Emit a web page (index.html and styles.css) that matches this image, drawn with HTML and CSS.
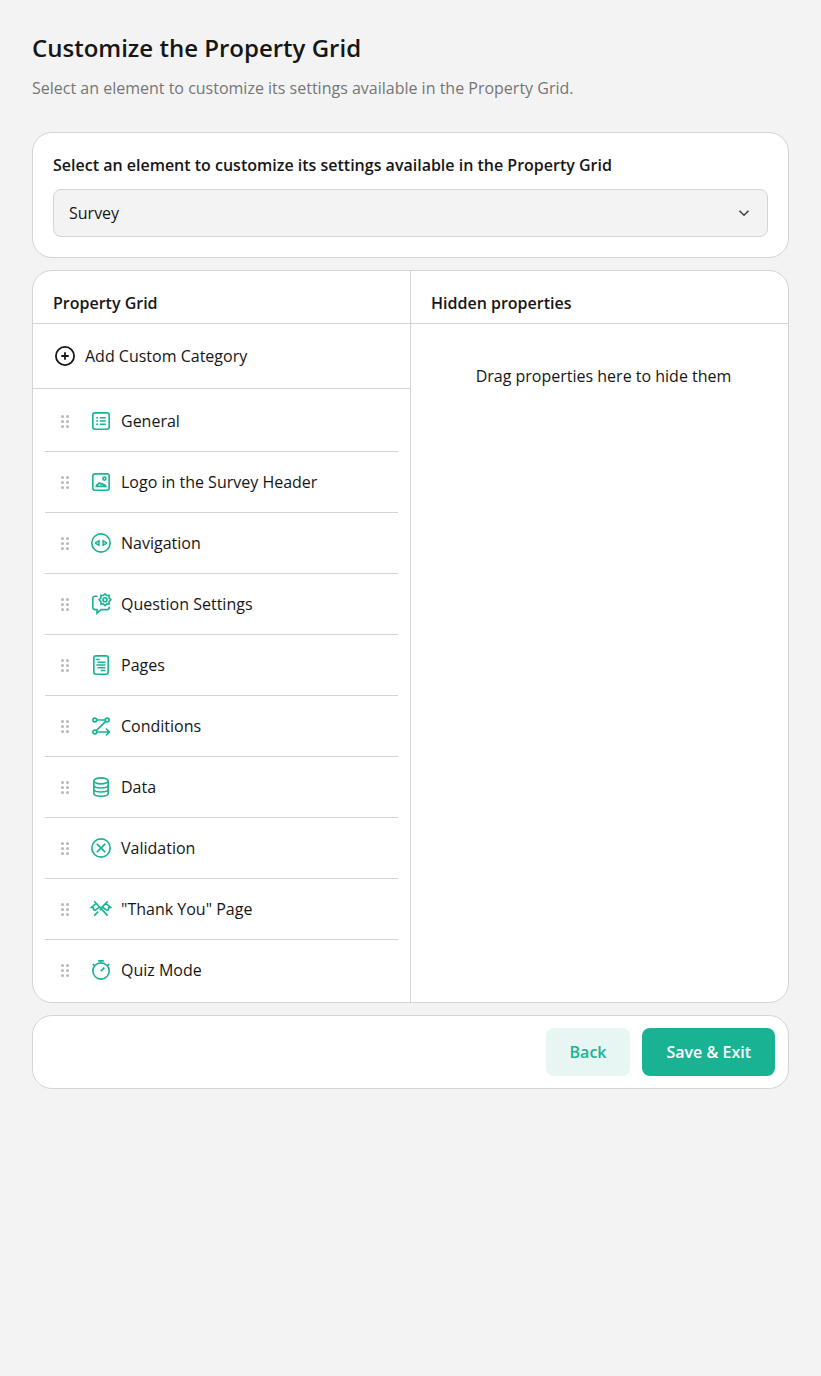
FILE: index.html
```html
<!DOCTYPE html>
<html lang="en">
<head>
<meta charset="utf-8">
<title>Customize the Property Grid</title>
<link rel="stylesheet" href="styles.css">
</head>
<body>
<svg class="sprite" aria-hidden="true">
  <symbol id="grip" viewBox="0 0 24 24"><g fill="currentColor"><circle cx="9.5" cy="7.5" r="1.5"/><circle cx="14.5" cy="7.5" r="1.5"/><circle cx="9.5" cy="12.5" r="1.5"/><circle cx="14.5" cy="12.5" r="1.5"/><circle cx="9.5" cy="17.5" r="1.5"/><circle cx="14.5" cy="17.5" r="1.5"/></g></symbol>
</svg>
<main class="page">
  <header class="page-header">
    <h1 class="title">Customize the Property Grid</h1>
    <p class="subtitle">Select an element to customize its settings available in the Property Grid.</p>
  </header>

  <section class="card selector">
    <h2 class="heading">Select an element to customize its settings available in the Property Grid</h2>
    <div class="dropdown" role="combobox">
      <span>Survey</span>
      <svg class="chevron" viewBox="0 0 16 16"><path d="M3.5 5.8L8 10.2l4.5-4.4"/></svg>
    </div>
  </section>

  <section class="card panels">
    <div class="panel">
      <h2 class="heading panel-title">Property Grid</h2>
      <div class="add">
        <svg class="add-icon" viewBox="0 0 24 24"><circle cx="12" cy="12" r="9.1"/><path d="M12 8.3v7.4M8.3 12h7.4"/></svg>
        <span>Add Custom Category</span>
      </div>
      <ul class="list">
        <li class="row"><svg class="grip"><use href="#grip"/></svg>
          <svg class="icon" viewBox="0 0 24 24"><rect x="3.8" y="3.8" width="16.4" height="16.4" rx="2.2"/><path d="M7.2 8.75h2M7.2 12h2M7.2 15.25h2M10.8 8.75h6M10.8 12h6M10.8 15.25h6"/></svg>
          <span>General</span></li>
        <li class="row"><svg class="grip"><use href="#grip"/></svg>
          <svg class="icon" viewBox="0 0 24 24"><rect x="3.8" y="3.8" width="16.4" height="16.4" rx="2.2"/><circle cx="15.4" cy="8.6" r="1.5"/><path d="M7.3 16.3c.5-1.8 1.3-2.3 2-2.2.6-1.3 2.2-1.4 2.8.2.8-1 1.9-.7 2.3.3 1 0 1.8.5 2.3 1.7z"/></svg>
          <span>Logo in the Survey Header</span></li>
        <li class="row"><svg class="grip"><use href="#grip"/></svg>
          <svg class="icon" viewBox="0 0 24 24"><circle cx="12" cy="12" r="9.15"/><path d="M9.9 9.8v4.4L6.7 12.3v-.6zM14.1 9.8v4.4l3.2-1.9v-.6z" stroke-width="1.5"/></svg>
          <span>Navigation</span></li>
        <li class="row"><svg class="grip"><use href="#grip"/></svg>
          <svg class="icon" viewBox="0 0 24 24"><path d="M8.5 4.2H6A2.2 2.2 0 0 0 3.8 6.4v9a2.2 2.2 0 0 0 2.2 2.2h2v3.6l4-3.6h6a2.2 2.2 0 0 0 2.2-2.2v-.6"/><path d="M16 1.9l1.7 1.6 2.4-.1v2.4L21.9 7.7l-1.8 1.9V12l-2.4-.1L16 13.5l-1.7-1.6-2.4.1V9.6l-1.8-1.9 1.8-1.9V3.4l2.4.1z"/><circle cx="16" cy="7.7" r="2"/></svg>
          <span>Question Settings</span></li>
        <li class="row"><svg class="grip"><use href="#grip"/></svg>
          <svg class="icon" viewBox="0 0 24 24"><rect x="4.8" y="2.8" width="14.4" height="18.4" rx="2.2"/><path d="M7.2 6.5h3.6M8.5 9.25h8M7.3 12h9.2M8.5 14.75h8M11.7 17.5h4.8" stroke-width="1.5"/></svg>
          <span>Pages</span></li>
        <li class="row"><svg class="grip"><use href="#grip"/></svg>
          <svg class="icon" viewBox="0 0 24 24"><circle cx="5.8" cy="6" r="1.9"/><circle cx="18.2" cy="6" r="1.9"/><circle cx="5.8" cy="18" r="1.9"/><path d="M7.7 6h8.6M16.8 7.4L7.2 16.7M7.7 18H20M17 14.5l3.4 3.5-3.4 3.5"/></svg>
          <span>Conditions</span></li>
        <li class="row"><svg class="grip"><use href="#grip"/></svg>
          <svg class="icon" viewBox="0 0 24 24"><ellipse cx="12" cy="5.8" rx="7.2" ry="3"/><path d="M4.8 6v12.2c0 1.7 3.2 3 7.2 3s7.2-1.3 7.2-3V6M4.8 10c0 1.7 3.2 3 7.2 3s7.2-1.3 7.2-3M4.8 14c0 1.7 3.2 3 7.2 3s7.2-1.3 7.2-3"/></svg>
          <span>Data</span></li>
        <li class="row"><svg class="grip"><use href="#grip"/></svg>
          <svg class="icon" viewBox="0 0 24 24"><circle cx="12" cy="12" r="9.15"/><path d="M7.8 7.8l8.4 8.4M16.2 7.8l-8.4 8.4"/></svg>
          <span>Validation</span></li>
        <li class="row"><svg class="grip"><use href="#grip"/></svg>
          <svg class="icon" viewBox="0 0 24 24"><path d="M5.2 4.3L18.6 18.6M18.8 4.3L16.9 6.3M13.6 10.2l-2.7 2.9M9.2 14.6l-4 4M7.2 6.3L2.4 10.4l2 .3.2 2 1.8.4L10.8 9.9M16.8 6.3l4.8 4.1-2 .3-.2 2-1.8.4-4.4-3.2z"/></svg>
          <span>"Thank You" Page</span></li>
        <li class="row"><svg class="grip"><use href="#grip"/></svg>
          <svg class="icon" viewBox="0 0 24 24"><circle cx="12" cy="13" r="8.15"/><path d="M9.2 2.8h5.6M11.8 13.2L15.4 9.6M3.8 6l2 1.8M20.2 6l-2 1.8"/></svg>
          <span>Quiz Mode</span></li>
      </ul>
    </div>
    <div class="panel hidden-panel">
      <h2 class="heading panel-title">Hidden properties</h2>
      <p class="placeholder">Drag properties here to hide them</p>
    </div>
  </section>

  <footer class="card actions">
    <button class="button secondary">Back</button>
    <button class="button primary">Save &amp; Exit</button>
  </footer>
</main>
</body>
</html>
```

FILE: styles.css
```css
* { box-sizing: border-box; }

body {
  margin: 0;
  min-height: 100vh;
  background: #f3f3f3;
  color: #161616;
  font: 400 16px/24px "Open Sans", sans-serif;
}

.sprite { display: none; }

.page {
  display: flex;
  flex-direction: column;
  gap: 12px;
  padding: 32px;
}

.page-header { padding-bottom: 20px; }

.title, .subtitle, .heading, .placeholder { margin: 0; }

.title {
  font-size: 24px;
  line-height: 32px;
  font-weight: 600;
}

.subtitle {
  margin-top: 12px;
  color: #767676;
}

.heading {
  font-size: 16px;
  line-height: 24px;
  font-weight: 600;
}

.card {
  background: #fff;
  border: 1px solid #d4d4d4;
  border-radius: 20px;
}

.selector {
  display: flex;
  flex-direction: column;
  gap: 12px;
  height: 126px;
  padding: 20px;
}

.dropdown {
  display: flex;
  align-items: center;
  justify-content: space-between;
  height: 48px;
  padding: 0 15px;
  background: #f3f3f3;
  border: 1px solid #d4d4d4;
  border-radius: 8px;
}

.chevron {
  width: 16px;
  height: 16px;
  fill: none;
  stroke: #404040;
  stroke-width: 1.6;
}

.panels {
  display: grid;
  grid-template-columns: 377px 1fr;
  height: 733px;
}

.hidden-panel { border-left: 1px solid #d4d4d4; }

.panel-title {
  height: 53px;
  padding: 20px 20px 0;
  border-bottom: 1px solid #d4d4d4;
}

.add {
  display: flex;
  align-items: center;
  gap: 8px;
  height: 65px;
  padding-left: 20px;
  border-bottom: 1px solid #d4d4d4;
}

.add-icon {
  width: 24px;
  height: 24px;
  fill: none;
  stroke: #161616;
  stroke-width: 1.8;
}

.list {
  margin: 0;
  padding: 2px 12px;
  list-style: none;
}

.row {
  display: flex;
  align-items: center;
  height: 61px;
  padding-left: 8px;
  border-bottom: 1px solid #d4d4d4;
}

.row:last-child {
  height: 60px;
  border-bottom: 0;
}

.grip {
  width: 24px;
  height: 24px;
  margin-right: 12px;
  color: #b8b8b8;
}

.icon {
  width: 24px;
  height: 24px;
  margin-right: 8px;
  fill: none;
  stroke: #19b394;
  stroke-width: 1.65;
}

.placeholder {
  padding: 40px 16px 0 24px;
  text-align: center;
}

.actions {
  display: flex;
  justify-content: flex-end;
  gap: 12px;
  height: 74px;
  padding: 12px 13px;
}

.button {
  height: 48px;
  padding: 0 24px;
  border: 0;
  border-radius: 8px;
  font: 600 16px/24px "Open Sans", sans-serif;
}

.secondary {
  background: #e8f6f3;
  color: #19b394;
}

.primary {
  background: #19b394;
  color: #fff;
}
```
